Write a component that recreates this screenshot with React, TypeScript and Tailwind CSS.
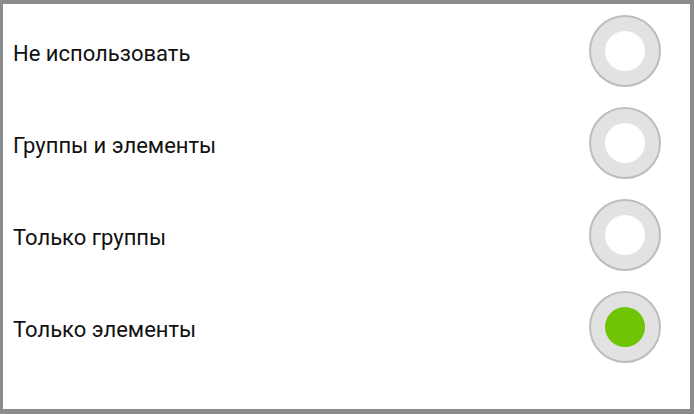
import { useState } from 'react'

const options = ['Не использовать', 'Группы и элементы', 'Только группы', 'Только элементы']

export default function App() {
  const [selected, setSelected] = useState(3)

  return (
    <div className="w-[694px] h-[414px] bg-[#8c8c8c] pl-[3px] pt-[4px] pr-[4px] pb-[5px]">
      <div className="w-full h-full bg-white pt-[1px] flex flex-col font-['Roboto',sans-serif]">
        {options.map((label, i) => (
          <button
            key={label}
            onClick={() => setSelected(i)}
            className="h-[92px] flex items-center justify-between pl-[10px] pr-[29px] text-left"
          >
            <span className="mt-[4px] text-[22px] text-[#111111]">{label}</span>
            {/* radio ring */}
            <span className="w-[72px] h-[72px] rounded-full bg-[#e2e2e2] border-2 border-[#bdbdbd] flex items-center justify-center">
              <span
                className={
                  selected === i
                    ? 'w-[40px] h-[40px] rounded-full bg-[#6fc406]'
                    : 'w-[40px] h-[40px] rounded-full bg-white'
                }
              />
            </span>
          </button>
        ))}
      </div>
    </div>
  )
}
